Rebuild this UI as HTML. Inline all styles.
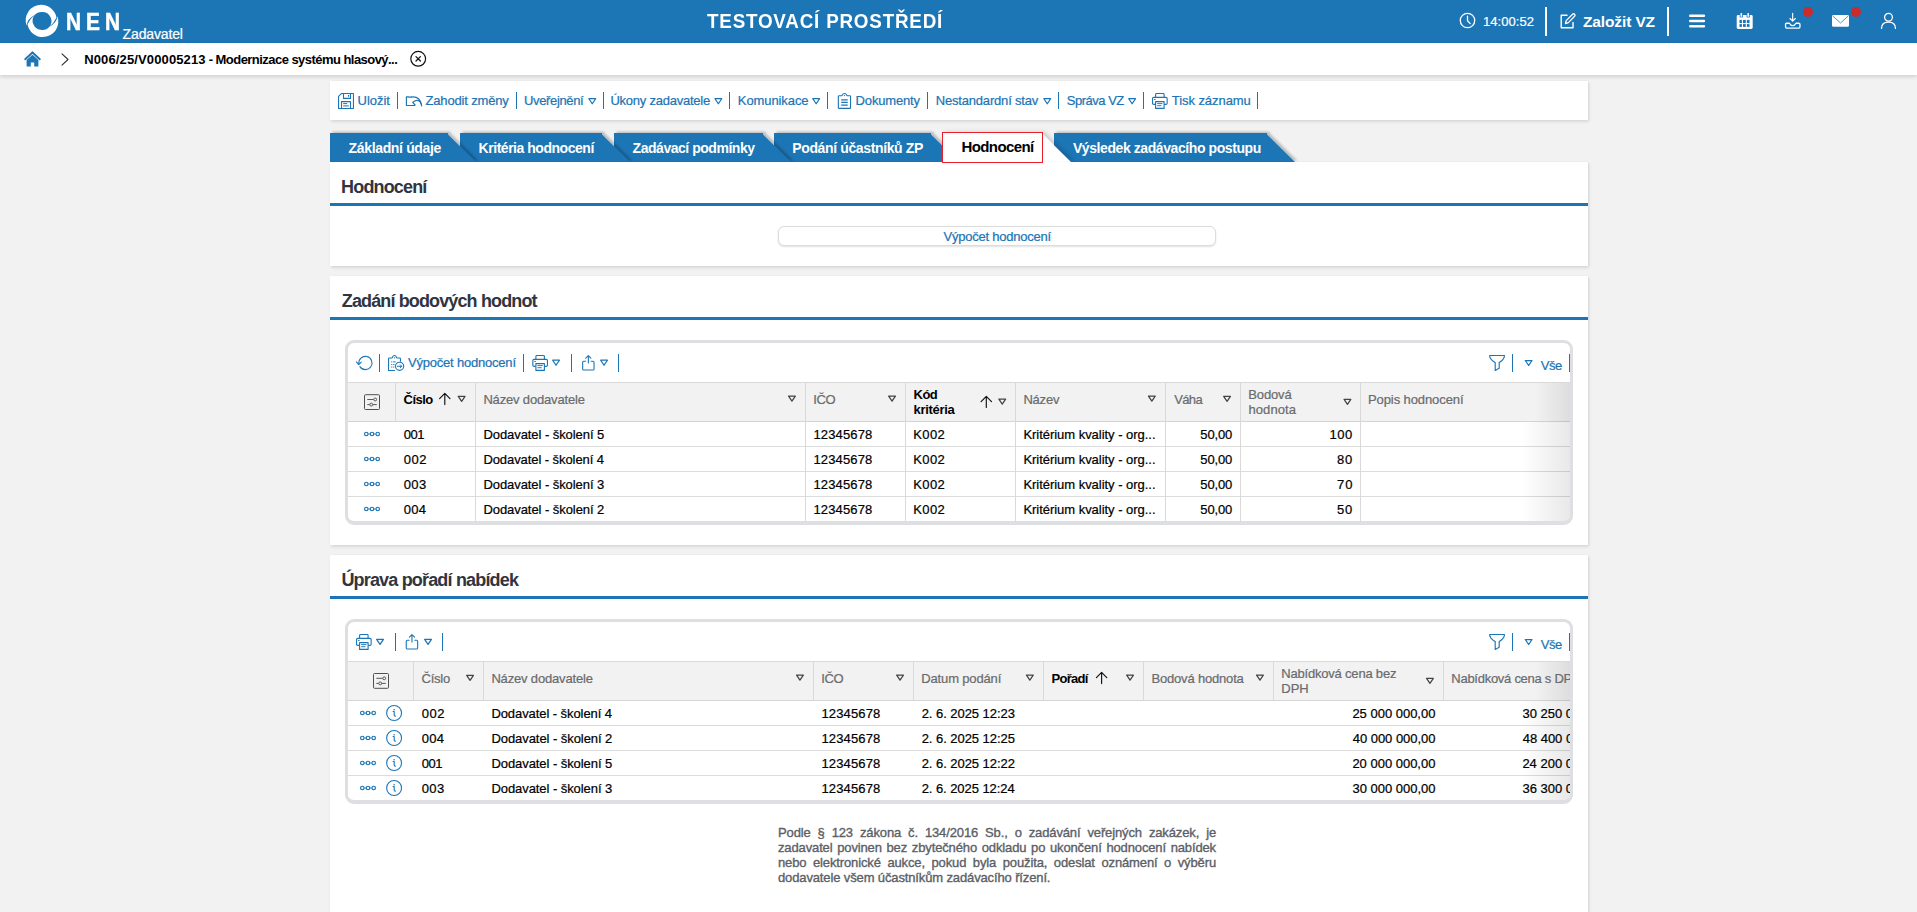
<!DOCTYPE html>
<html lang="cs">
<head>
<meta charset="utf-8">
<title>NEN - Hodnocení</title>
<style>
*{box-sizing:border-box;margin:0;padding:0}
html,body{width:1917px;height:912px;overflow:hidden}
body{background:#f2f2f2;font-family:"Liberation Sans",sans-serif;font-size:13px;color:#000;position:relative}
.t{position:absolute;white-space:nowrap;line-height:20px;height:20px}
.r{-webkit-text-stroke:0.22px}
.abs{position:absolute}
svg{position:absolute;overflow:visible}
.hdr{position:absolute;left:0;top:0;width:1917px;height:43px;background:#1c75b4}
.crumb{position:absolute;left:0;top:43px;width:1917px;height:32px;background:#fff;box-shadow:0 2px 4px rgba(0,0,0,.14)}
.card{position:absolute;left:330px;width:1258px;background:#fff;box-shadow:1px 2px 3px rgba(0,0,0,.10),1px 0 2px rgba(0,0,0,.05)}
.bline{position:absolute;left:0;width:1258px;height:3px;background:#1c75b4}
.sep{position:absolute;width:1px;background:#1c75b4}
.grid{position:absolute;left:345px;width:1228px;border:3px solid #dddfe2;border-bottom-width:4px;border-radius:9px;background:#fff;overflow:hidden}
.ghead{position:absolute;left:0;width:1222px;height:40px;background:#f2f2f2;border-top:1px solid #d9d9d9;border-bottom:1px solid #d4d4d4}
.vsep{position:absolute;width:1px;background:#d9d9d9}
.hsep{position:absolute;left:0;width:1222px;height:1px;background:#dcdcdc}
.fade{position:absolute;right:0;top:0;bottom:0;width:48px;background:linear-gradient(to right,rgba(0,0,0,0),rgba(0,0,0,.09))}
.btn{position:absolute;border:1px solid #dcdcdc;border-radius:6px;background:#fff;box-shadow:0 1px 2px rgba(0,0,0,.12)}
.note{position:absolute;left:778px;top:825px;width:438px;font-size:13px;line-height:15px;color:#5b6067;text-align:justify;letter-spacing:-0.13px;-webkit-text-stroke:0.35px #5b6067}
.tab{position:absolute;top:133px;height:29px;background:#1c75b4}
</style>
</head>
<body>
<div class="hdr">
<svg style="left:22px;top:0px" width="40" height="42" viewBox="22 0 40 42"><g transform="translate(42 21.2)" fill="#fff"><path d="M-15.4 4.4 A15.55 15.55 0 0 1 -0.8 -16.45 A15.55 15.55 0 0 1 14.5 -3.6 Q11.9 1.9 7.2 5.9 A9.2 9.2 0 0 0 0.1 -9.3 A9.2 9.2 0 0 0 -7.4 -6.1 Q-15 -1.95 -15.4 4.4 Z"/><path d="M-15.4 4.4 A15.55 15.55 0 0 1 -0.8 -16.45 A15.55 15.55 0 0 1 14.5 -3.6 Q11.9 1.9 7.2 5.9 A9.2 9.2 0 0 0 0.1 -9.3 A9.2 9.2 0 0 0 -7.4 -6.1 Q-15 -1.95 -15.4 4.4 Z" transform="rotate(180) translate(0 0.6)"/></g></svg>
<span class="t " style="left:65.7px;top:12px;font-size:24px;font-weight:700;color:#fff;letter-spacing:5.79px;-webkit-text-stroke:0.55px #fff;transform:scaleX(0.87);transform-origin:0 0;">NEN</span>
<span class="t r" style="left:122.6px;top:24px;font-size:14px;color:#fff;letter-spacing:-0.15px;">Zadavatel</span>
<span class="t " style="left:706.6px;top:11px;font-size:20px;font-weight:700;color:#fff;letter-spacing:0.857px;transform:scaleX(0.94);transform-origin:0 0;">TESTOVACÍ PROSTŘEDÍ</span>
<svg style="left:1459px;top:12px;" width="17" height="17" viewBox="0 0 17 17" fill="none"><circle cx="8.5" cy="8.5" r="7.2" stroke="#fff" stroke-width="1.3"/><path d="M8.5 4.2 V8.8 L11.2 11.6" stroke="#fff" stroke-width="1.3" stroke-linecap="round" stroke-linejoin="round"/></svg>
<span class="t r" style="left:1482.9px;top:12px;font-size:13px;color:#fff;letter-spacing:0.057px;">14:00:52</span>
<div class="abs" style="left:1545px;top:7px;width:2px;height:29px;background:#fff"></div>
<svg style="left:1559px;top:12px;" width="18" height="18" viewBox="0 0 18 18" fill="none"><path d="M8 3.2 H2.2 V15.8 H14 V10.5" stroke="#fff" stroke-width="1.4" stroke-linejoin="round" stroke-linecap="round"/><path d="M6.5 11.6 L7.2 8.6 L13.6 2.2 A1.3 1.3 0 0 1 15.6 4.2 L9.4 10.6 Z" stroke="#fff" stroke-width="1.3" stroke-linejoin="round"/></svg>
<span class="t " style="left:1582.9px;top:12px;font-size:15.5px;font-weight:700;color:#fff;letter-spacing:-0.111px;">Založit VZ</span>
<div class="abs" style="left:1667px;top:7px;width:2px;height:29px;background:#fff"></div>
<svg style="left:1689px;top:13px;" width="16" height="16" viewBox="0 0 16 16" fill="none"><path d="M1.3 2.7 H14.9 M1.3 8 H14.9 M1.3 13.3 H14.9" stroke="#fff" stroke-width="2.6" stroke-linecap="round"/></svg>
<svg style="left:1736px;top:12px;" width="18" height="18" viewBox="0 0 18 18" fill="none"><rect x="0.7" y="3.1" width="16" height="13.8" rx="1.4" fill="#fff"/>
<rect x="3.7" y="2.4" width="3.2" height="3" fill="#1c75b4"/><rect x="10.6" y="2.4" width="3.2" height="3" fill="#1c75b4"/>
<rect x="4.5" y="0.9" width="1.6" height="3.9" rx="0.6" fill="#fff"/><rect x="11.4" y="0.9" width="1.6" height="3.9" rx="0.6" fill="#fff"/>
<g fill="#1c75b4"><rect x="3.5" y="7.9" width="2.4" height="3.2"/><rect x="3.5" y="12.1" width="2.4" height="2.8"/><rect x="7.0" y="7.9" width="2.8" height="3.2"/><rect x="7.0" y="12.1" width="2.8" height="2.8"/><rect x="10.9" y="7.9" width="2.6" height="3.2"/><rect x="10.9" y="12.1" width="2.6" height="2.8"/></g></svg>
<svg style="left:1784px;top:12px;" width="18" height="18" viewBox="0 0 18 18" fill="none"><path d="M8.65 1.2 V8.8 M6 6.5 L8.65 9.1 L11.3 6.5" stroke="#fff" stroke-width="1.15" stroke-linecap="round" stroke-linejoin="round"/><path d="M5.4 11.25 H2.6 Q1.55 11.25 1.55 12.3 V15 Q1.55 16.05 2.6 16.05 H14.9 Q15.95 16.05 15.95 15 V12.3 Q15.95 11.25 14.9 11.25 H12 C11 13.2 10 13.6 8.7 13.6 C7.4 13.6 6.4 13.2 5.4 11.25 Z" stroke="#fff" stroke-width="1.3" stroke-linejoin="round"/></svg>
<div class="abs" style="left:1803px;top:7px;width:10px;height:10px;border-radius:50%;background:#cd2a2c"></div>
<svg style="left:1832px;top:15px;" width="17" height="12" viewBox="0 0 17 12" fill="none"><rect x="0" y="0" width="17" height="11.8" rx="1.4" fill="#fff"/><path d="M0.8 1 L8.5 8 L16.2 1" stroke="#1c75b4" stroke-width="0.75"/></svg>
<div class="abs" style="left:1851px;top:7px;width:10px;height:10px;border-radius:50%;background:#cd2a2c"></div>
<svg style="left:1880px;top:12px;" width="17" height="18" viewBox="0 0 17 18" fill="none"><circle cx="8.5" cy="5.3" r="3.9" stroke="#fff" stroke-width="1.3"/><path d="M1.5 16.4 C1.5 12 4.6 10.1 8.5 10.1 C12.4 10.1 15.5 12 15.5 16.4" stroke="#fff" stroke-width="1.3" stroke-linecap="round"/></svg>
</div>
<div class="crumb"></div>
<svg style="left:24px;top:51px;" width="17" height="16" viewBox="0 0 17 16" fill="none"><path d="M8.5 1.6 L1.2 8.2" stroke="#1c75b4" stroke-width="2" stroke-linecap="round"/><path d="M8.5 1.6 L15.8 8.2" stroke="#1c75b4" stroke-width="2" stroke-linecap="round"/><path d="M2.6 9 L8.5 3.8 L14.4 9 V15.6 H10.2 V11.4 H6.8 V15.6 H2.6 Z" fill="#1c75b4"/></svg>
<svg style="left:61px;top:53px;" width="8" height="13" viewBox="0 0 8 13" fill="none"><path d="M1 0.8 L7 6.5 L1 12.2" stroke="#333" stroke-width="1.1" stroke-linejoin="round" stroke-linecap="round"/></svg>
<span class="t " style="left:84.2px;top:50px;font-size:13px;font-weight:700;color:#000;letter-spacing:0.131px;">N006/25/V00005213</span>
<span class="t " style="left:208.7px;top:50px;font-size:13px;font-weight:700;color:#000;letter-spacing:-0.542px;">- Modernizace systému hlasový...</span>
<svg style="left:410px;top:50px;" width="17" height="17" viewBox="0 0 17 17" fill="none"><g transform="translate(0.2 0.8)"><circle cx="8" cy="8" r="7.4" stroke="#111" stroke-width="1.2"/><path d="M5.8 5.8 L10.2 10.2 M10.2 5.8 L5.8 10.2" stroke="#111" stroke-width="1.25" stroke-linecap="round"/></g></svg>
<div class="card" style="top:81px;height:39px"></div>
<svg style="left:338px;top:93px;" width="16" height="16" viewBox="0 0 16 16" fill="none"><path d="M3.4 0.55 H15.45 V15.45 H0.55 V3.4 Z" stroke="#1c75b4" stroke-width="1.1" stroke-linejoin="round"/><path d="M5.5 0.6 V5.4 H12.5 V0.6" stroke="#1c75b4" stroke-width="1.1" stroke-linejoin="round"/><path d="M10.5 2 V3.7" stroke="#1c75b4" stroke-width="1.2"/><path d="M3.5 15.4 V8.6 H12.5 V15.4" stroke="#1c75b4" stroke-width="1.1" stroke-linejoin="round"/><path d="M5.2 10.6 H9.2 M5.2 12.9 H10.8" stroke="#1c75b4" stroke-width="1"/></svg>
<span class="t r" style="left:357.6px;top:91px;font-size:13px;color:#1b74b5;letter-spacing:-0.04px;">Uložit</span>
<div class="abs" style="left:397px;top:92px;width:1px;height:17px;background:#1b74b5"></div>
<svg style="left:405px;top:96px;" width="18" height="11" viewBox="0 0 18 11" fill="none"><g transform="translate(0.5 0)"><path d="M6 1.1 H3.6 L2.9 0.9 H0.9 V9.5 H9.2" stroke="#1c75b4" stroke-width="1.15" stroke-linejoin="round" stroke-linecap="round"/><path d="M6 1 C11.6 0 15.7 3.8 16.2 9.8" stroke="#1c75b4" stroke-width="1.25" stroke-linecap="round"/><path d="M15.6 8 C14.6 5 12.6 4 10.4 4.5 L7.2 6.3 L9.6 9" stroke="#1c75b4" stroke-width="1.15" stroke-linecap="round" stroke-linejoin="round"/></g></svg>
<span class="t r" style="left:425.5px;top:91px;font-size:13px;color:#1b74b5;letter-spacing:-0.167px;">Zahodit změny</span>
<div class="abs" style="left:516px;top:92px;width:1px;height:17px;background:#1b74b5"></div>
<span class="t r" style="left:524.0px;top:91px;font-size:13px;color:#1b74b5;letter-spacing:-0.356px;">Uveřejnění</span>
<svg style="left:588px;top:98px;" width="9" height="7" viewBox="0 0 9 7" fill="none"><g transform="translate(0.25 0.1)"><path d="M0.625 0.625 L7.375 0.625 L4.0 5.625 Z" stroke="#1b74b5" stroke-width="1.25" stroke-linejoin="round"/></g></svg>
<div class="abs" style="left:603px;top:92px;width:1px;height:17px;background:#1b74b5"></div>
<span class="t r" style="left:610.4px;top:91px;font-size:13px;color:#1b74b5;letter-spacing:-0.233px;">Úkony zadavatele</span>
<svg style="left:714px;top:98px;" width="9" height="7" viewBox="0 0 9 7" fill="none"><g transform="translate(0.35 0.1)"><path d="M0.625 0.625 L7.375 0.625 L4.0 5.625 Z" stroke="#1b74b5" stroke-width="1.25" stroke-linejoin="round"/></g></svg>
<div class="abs" style="left:729px;top:92px;width:1px;height:17px;background:#1b74b5"></div>
<span class="t r" style="left:737.8px;top:91px;font-size:13px;color:#1b74b5;letter-spacing:-0.089px;">Komunikace</span>
<svg style="left:812px;top:98px;" width="9" height="7" viewBox="0 0 9 7" fill="none"><g transform="translate(0.15 0.1)"><path d="M0.625 0.625 L7.375 0.625 L4.0 5.625 Z" stroke="#1b74b5" stroke-width="1.25" stroke-linejoin="round"/></g></svg>
<div class="abs" style="left:827px;top:92px;width:1px;height:17px;background:#1b74b5"></div>
<svg style="left:837px;top:93px;" width="15" height="17" viewBox="0 0 15 17" fill="none"><g transform="translate(0.5 0)"><path d="M0.85 14.7 V3.4 Q0.85 2.7 1.55 2.7 H4.2 C5 2.7 4.7 0.55 7 0.55 C9.3 0.55 9 2.7 9.8 2.7 H12.35 Q13.05 2.7 13.05 3.4 V14.7 Q13.05 15.4 12.35 15.4 H1.55 Q0.85 15.4 0.85 14.7 Z" stroke="#1b74b5" stroke-width="1.1" stroke-linejoin="round"/><circle cx="7" cy="2.6" r="0.65" fill="#1b74b5"/><path d="M3.7 6.85 H10.2 M3.7 9.4 H10.2 M3.7 12 H10.2" stroke="#1b74b5" stroke-width="1.25"/></g></svg>
<span class="t r" style="left:855.6px;top:91px;font-size:13px;color:#1b74b5;letter-spacing:-0.163px;">Dokumenty</span>
<div class="abs" style="left:927px;top:92px;width:1px;height:17px;background:#1b74b5"></div>
<span class="t r" style="left:935.7px;top:91px;font-size:13px;color:#1b74b5;letter-spacing:-0.181px;">Nestandardní stav</span>
<svg style="left:1043px;top:98px;" width="9" height="7" viewBox="0 0 9 7" fill="none"><g transform="translate(0.25 0.1)"><path d="M0.625 0.625 L7.375 0.625 L4.0 5.625 Z" stroke="#1b74b5" stroke-width="1.25" stroke-linejoin="round"/></g></svg>
<div class="abs" style="left:1058px;top:92px;width:1px;height:17px;background:#1b74b5"></div>
<span class="t r" style="left:1066.8px;top:91px;font-size:13px;color:#1b74b5;letter-spacing:-0.487px;">Správa VZ</span>
<svg style="left:1128px;top:98px;" width="9" height="7" viewBox="0 0 9 7" fill="none"><g transform="translate(0.15 0.1)"><path d="M0.625 0.625 L7.375 0.625 L4.0 5.625 Z" stroke="#1b74b5" stroke-width="1.25" stroke-linejoin="round"/></g></svg>
<div class="abs" style="left:1143px;top:92px;width:1px;height:17px;background:#1b74b5"></div>
<svg style="left:1152px;top:93px;" width="16" height="16" viewBox="0 0 16 16" fill="none"><path d="M3.6 4.2 V1.4 Q3.6 0.55 4.5 0.55 H11.2 Q12.1 0.55 12.1 1.4 V4.2" stroke="#1b74b5" stroke-width="1.1"/><path d="M3.4 11.4 H1.8 Q0.55 11.4 0.55 10.2 V5.6 Q0.55 4.4 1.8 4.4 H13.9 Q15.15 4.4 15.15 5.6 V10.2 Q15.15 11.4 13.9 11.4 H12.3" stroke="#1b74b5" stroke-width="1.1"/><path d="M3.6 8.6 H12.1 V15.4 H3.6 Z" stroke="#1b74b5" stroke-width="1.1" stroke-linejoin="round"/><path d="M5.2 10.6 H10.4 M5.2 12.7 H9.4" stroke="#1b74b5" stroke-width="0.95"/><path d="M2 6.5 H3.6" stroke="#1b74b5" stroke-width="0.9"/></svg>
<span class="t r" style="left:1171.8px;top:91px;font-size:13px;color:#1b74b5;letter-spacing:-0.064px;">Tisk záznamu</span>
<div class="abs" style="left:1257px;top:92px;width:1px;height:17px;background:#1b74b5"></div>
<svg style="left:330px;top:130px" width="980" height="32" viewBox="0 0 980 32"><defs><filter id="ts" x="-5%" y="-30%" width="110%" height="160%"><feDropShadow dx="2.4" dy="-1.3" stdDeviation="1.3" flood-color="#000" flood-opacity=".23"/></filter><filter id="tw" x="-5%" y="-30%" width="115%" height="160%"><feDropShadow dx="3" dy="-1" stdDeviation="2" flood-color="#000" flood-opacity=".16"/></filter></defs><polygon points="724,3 937,3 937,4.5 965,32 724,32" fill="#1c75b4" filter="url(#ts)"/><polygon points="612,3 713,3 713,4.5 741,32 612,32" fill="#fff" filter="url(#tw)"/><polygon points="444,3 601,3 601,4.5 629,32 444,32" fill="#1c75b4" filter="url(#ts)"/><polygon points="284,3 433,3 433,4.5 461,32 284,32" fill="#1c75b4" filter="url(#ts)"/><polygon points="130,3 272,3 272,4.5 300,32 130,32" fill="#1c75b4" filter="url(#ts)"/><polygon points="0,3 118,3 118,4.5 146,32 0,32" fill="#1c75b4" filter="url(#ts)"/></svg>
<div class="abs" style="left:942px;top:132px;width:101px;height:31px;border:1px solid #e8202a;background:#fff;z-index:3"></div>
<span class="t " style="left:348.6px;top:138px;font-size:14px;font-weight:700;color:#fff;letter-spacing:-0.346px;">Základní údaje</span>
<span class="t " style="left:478.6px;top:138px;font-size:14px;font-weight:700;color:#fff;letter-spacing:-0.471px;">Kritéria hodnocení</span>
<span class="t " style="left:632.6px;top:138px;font-size:14px;font-weight:700;color:#fff;letter-spacing:-0.469px;">Zadávací podmínky</span>
<span class="t " style="left:792.3px;top:138px;font-size:14px;font-weight:700;color:#fff;letter-spacing:-0.372px;">Podání účastníků ZP</span>
<span class="t " style="left:961.4px;top:137px;font-size:15px;font-weight:700;color:#000;letter-spacing:-0.575px;z-index:4;">Hodnocení</span>
<span class="t " style="left:1072.9px;top:138px;font-size:14px;font-weight:700;color:#fff;letter-spacing:-0.415px;">Výsledek zadávacího postupu</span>
<div class="card" style="top:162px;height:104px"><div class="bline" style="top:41px"></div></div>
<span class="t " style="left:341.1px;top:177px;font-size:18px;font-weight:700;color:#30353f;letter-spacing:-0.85px;">Hodnocení</span>
<div class="btn" style="left:778px;top:226px;width:438px;height:20px"></div>
<span class="t r" style="left:943.5px;top:227px;font-size:13px;color:#1b74b5;letter-spacing:-0.225px;">Výpočet hodnocení</span>
<div class="card" style="top:276px;height:269px"><div class="bline" style="top:41px"></div></div>
<span class="t " style="left:341.8px;top:291px;font-size:18px;font-weight:700;color:#30353f;letter-spacing:-0.871px;">Zadání bodových hodnot</span>
<div class="card" style="top:555px;height:380px"><div class="bline" style="top:41px"></div></div>
<span class="t " style="left:341.4px;top:570px;font-size:18px;font-weight:700;color:#30353f;letter-spacing:-0.825px;">Úprava pořadí nabídek</span>
<div class="grid" style="top:340px;height:185px">
<div class="ghead" style="top:39px"></div>
<div class="hsep" style="top:103px"></div>
<div class="hsep" style="top:128px"></div>
<div class="hsep" style="top:153px"></div>
<div class="vsep" style="left:47px;top:39px;height:40px"></div>
<div class="vsep" style="left:127px;top:39px;height:140px"></div>
<div class="vsep" style="left:457px;top:39px;height:140px"></div>
<div class="vsep" style="left:557px;top:39px;height:140px"></div>
<div class="vsep" style="left:667px;top:39px;height:140px"></div>
<div class="vsep" style="left:817px;top:39px;height:140px"></div>
<div class="vsep" style="left:892px;top:39px;height:140px"></div>
<div class="vsep" style="left:1012px;top:39px;height:140px"></div>
<div class="fade" style="top:79px"></div>
<div class="fade" style="top:40px;height:39px;bottom:auto;width:36px;background:linear-gradient(to right,rgba(0,0,0,0),rgba(0,0,0,.085))"></div>
</div>
<svg style="left:356px;top:355px;" width="17" height="16" viewBox="0 0 17 16" fill="none"><path d="M2.9 9 A6.6 6.6 0 1 1 3.9 11.6" stroke="#1c75b4" stroke-width="1.1" stroke-linecap="round"/><path d="M0.4 6.9 L2.7 9.6 L5.3 7.2" stroke="#1c75b4" stroke-width="1.1" stroke-linecap="round" stroke-linejoin="round"/></svg>
<div class="abs" style="left:379px;top:354px;width:1px;height:18px;background:#1b74b5"></div>
<svg style="left:388px;top:355px;" width="17" height="17" viewBox="0 0 17 17" fill="none"><path d="M6.6 15.45 H0.55 V3.7 Q0.55 3 1.25 3 H3.9 C4.7 3 4.3 0.55 6.5 0.55 C8.7 0.55 8.3 3 9.1 3 H11.75 Q12.45 3 12.45 3.7 V6.2" stroke="#1c75b4" stroke-width="1.1" stroke-linejoin="round" stroke-linecap="round"/><circle cx="6.5" cy="2.8" r="0.65" fill="#1c75b4"/><path d="M3.2 6.9 H4.3 M5.2 6.9 H7.6 M3.2 9.6 H4.3 M5.2 9.6 H6.5 M3.2 12.1 H4.3 M5.2 12.1 H6.3" stroke="#1c75b4" stroke-width="1"/><circle cx="11.6" cy="11.3" r="4.1" stroke="#1c75b4" stroke-width="1.1"/><path d="M9.4 11.3 H13.6 M12.3 9.8 L13.8 11.3 L12.3 12.8" stroke="#1c75b4" stroke-width="1" stroke-linecap="round" stroke-linejoin="round"/></svg>
<span class="t r" style="left:408.0px;top:353px;font-size:13px;color:#1b74b5;letter-spacing:-0.206px;">Výpočet hodnocení</span>
<div class="abs" style="left:523px;top:354px;width:1px;height:18px;background:#1b74b5"></div>
<svg style="left:532px;top:355px;" width="17" height="16" viewBox="0 0 17 16" fill="none"><g transform="translate(0.3 0)"><path d="M3.6 4.2 V1.4 Q3.6 0.55 4.5 0.55 H11.2 Q12.1 0.55 12.1 1.4 V4.2" stroke="#1b74b5" stroke-width="1.1"/><path d="M3.4 11.4 H1.8 Q0.55 11.4 0.55 10.2 V5.6 Q0.55 4.4 1.8 4.4 H13.9 Q15.15 4.4 15.15 5.6 V10.2 Q15.15 11.4 13.9 11.4 H12.3" stroke="#1b74b5" stroke-width="1.1"/><path d="M3.6 8.6 H12.1 V15.4 H3.6 Z" stroke="#1b74b5" stroke-width="1.1" stroke-linejoin="round"/><path d="M5.2 10.6 H10.4 M5.2 12.7 H9.4" stroke="#1b74b5" stroke-width="0.95"/><path d="M2 6.5 H3.6" stroke="#1b74b5" stroke-width="0.9"/></g></svg>
<svg style="left:552px;top:359px;" width="9" height="7" viewBox="0 0 9 7" fill="none"><g transform="translate(0.05 0.6)"><path d="M0.625 0.625 L7.375 0.625 L4.0 5.625 Z" stroke="#1b74b5" stroke-width="1.25" stroke-linejoin="round"/></g></svg>
<div class="abs" style="left:571px;top:354px;width:1px;height:18px;background:#1b74b5"></div>
<svg style="left:582px;top:355px;" width="13" height="16" viewBox="0 0 13 16" fill="none"><path d="M3.5 6.3 H1.7 Q0.65 6.3 0.65 7.4 V14 Q0.65 15.05 1.7 15.05 H11 Q12.05 15.05 12.05 14 V7.4 Q12.05 6.3 11 6.3 H9.2" stroke="#1c75b4" stroke-width="1.1" stroke-linecap="round"/><path d="M6.35 8 V0.8 M3.8 3.2 L6.35 0.65 L8.9 3.2" stroke="#1c75b4" stroke-width="1.1" stroke-linecap="round" stroke-linejoin="round"/></svg>
<svg style="left:600px;top:359px;" width="9" height="7" viewBox="0 0 9 7" fill="none"><g transform="translate(0.05 0.6)"><path d="M0.625 0.625 L7.375 0.625 L4.0 5.625 Z" stroke="#1b74b5" stroke-width="1.25" stroke-linejoin="round"/></g></svg>
<div class="abs" style="left:618px;top:354px;width:1px;height:18px;background:#1b74b5"></div>
<svg style="left:1489px;top:354px;" width="17" height="18" viewBox="0 0 17 18" fill="none"><g transform="translate(0 0.9)"><path d="M0.65 0.6 H15.45 C15.45 4.6 12.2 6.4 10.2 7.7 V13.3 L6.2 15.5 V7.7 C4.2 6.4 0.65 4.6 0.65 0.6 Z" stroke="#1c75b4" stroke-width="1.15" stroke-linejoin="round"/></g></svg>
<div class="abs" style="left:1512px;top:354px;width:1px;height:18px;background:#1b74b5"></div>
<svg style="left:1524px;top:359px;" width="9" height="8" viewBox="0 0 9 8" fill="none"><g transform="translate(0.65 0.9)"><path d="M0.625 0.625 L7.375 0.625 L4.0 5.625 Z" stroke="#1b74b5" stroke-width="1.25" stroke-linejoin="round"/></g></svg>
<span class="t r" style="left:1540.8px;top:356px;font-size:13px;color:#1b74b5;letter-spacing:-0.45px;">Vše</span>
<div class="abs" style="left:1569px;top:354px;width:1px;height:18px;background:#1c75b4"></div>
<svg style="left:364px;top:394px;" width="16" height="17" viewBox="0 0 16 17" fill="none"><g transform="translate(0 0.2)"><rect x="0.5" y="0.5" width="15" height="14.8" rx="1" stroke="#505050" stroke-width="1"/><path d="M3.3 5.3 H9.6" stroke="#505050" stroke-width="0.95"/><circle cx="11.2" cy="5.3" r="1.45" stroke="#505050" stroke-width="0.95"/><path d="M3.3 10.4 H5.7 M8.8 10.4 H12.8" stroke="#505050" stroke-width="0.95"/><circle cx="7.25" cy="10.4" r="1.45" stroke="#505050" stroke-width="0.95"/></g></svg>
<span class="t " style="left:403.5px;top:390px;font-size:13px;font-weight:700;color:#000;letter-spacing:-0.5px;">Číslo</span>
<svg style="left:438px;top:392px;" width="13" height="14" viewBox="0 0 13 14" fill="none"><g transform="translate(0.8 0.7)"><path d="M6 11.9 V0.9 M0.8 6 L6 0.7 L11.2 6" stroke="#111" stroke-width="1.15" stroke-linecap="round" stroke-linejoin="round"/></g></svg>
<svg style="left:457px;top:395px;" width="9" height="8" viewBox="0 0 9 8" fill="none"><g transform="translate(0.65 0.7)"><path d="M0.625 0.625 L7.375 0.625 L4.0 5.625 Z" stroke="#444" stroke-width="1.25" stroke-linejoin="round"/></g></svg>
<span class="t r" style="left:483.4px;top:390px;font-size:13px;color:#6a6b6d;letter-spacing:-0.167px;">Název dodavatele</span>
<svg style="left:787px;top:395px;" width="9" height="7" viewBox="0 0 9 7" fill="none"><g transform="translate(0.95 0.5)"><path d="M0.625 0.625 L7.375 0.625 L4.0 5.625 Z" stroke="#444" stroke-width="1.25" stroke-linejoin="round"/></g></svg>
<span class="t r" style="left:813.2px;top:390px;font-size:13px;color:#6a6b6d;letter-spacing:-0.4px;">IČO</span>
<svg style="left:888px;top:395px;" width="9" height="7" viewBox="0 0 9 7" fill="none"><g transform="translate(0.05 0.5)"><path d="M0.625 0.625 L7.375 0.625 L4.0 5.625 Z" stroke="#444" stroke-width="1.25" stroke-linejoin="round"/></g></svg>
<span class="t " style="left:913.6px;top:385px;font-size:13px;font-weight:700;color:#000;letter-spacing:-0.55px;">Kód</span>
<span class="t " style="left:913.5px;top:400px;font-size:13px;font-weight:700;color:#000;letter-spacing:-0.3px;">kritéria</span>
<svg style="left:980px;top:395px;" width="13" height="13" viewBox="0 0 13 13" fill="none"><g transform="translate(0.3 0.6)"><path d="M6 11.9 V0.9 M0.8 6 L6 0.7 L11.2 6" stroke="#111" stroke-width="1.15" stroke-linecap="round" stroke-linejoin="round"/></g></svg>
<svg style="left:998px;top:398px;" width="9" height="7" viewBox="0 0 9 7" fill="none"><g transform="translate(0.25 0.5)"><path d="M0.625 0.625 L7.375 0.625 L4.0 5.625 Z" stroke="#444" stroke-width="1.25" stroke-linejoin="round"/></g></svg>
<span class="t r" style="left:1023.4px;top:390px;font-size:13px;color:#6a6b6d;letter-spacing:-0.2px;">Název</span>
<svg style="left:1147px;top:395px;" width="9" height="7" viewBox="0 0 9 7" fill="none"><g transform="translate(0.85 0.5)"><path d="M0.625 0.625 L7.375 0.625 L4.0 5.625 Z" stroke="#444" stroke-width="1.25" stroke-linejoin="round"/></g></svg>
<span class="t r" style="left:1174.2px;top:390px;font-size:13px;color:#6a6b6d;letter-spacing:-0.633px;">Váha</span>
<svg style="left:1223px;top:395px;" width="9" height="8" viewBox="0 0 9 8" fill="none"><g transform="translate(0.05 0.7)"><path d="M0.625 0.625 L7.375 0.625 L4.0 5.625 Z" stroke="#444" stroke-width="1.25" stroke-linejoin="round"/></g></svg>
<span class="t r" style="left:1248.3px;top:385px;font-size:13px;color:#6a6b6d;letter-spacing:-0.14px;">Bodová</span>
<span class="t r" style="left:1248.4px;top:400px;font-size:13px;color:#6a6b6d;letter-spacing:0.1px;">hodnota</span>
<svg style="left:1343px;top:398px;" width="9" height="8" viewBox="0 0 9 8" fill="none"><g transform="translate(0.45 0.7)"><path d="M0.625 0.625 L7.375 0.625 L4.0 5.625 Z" stroke="#444" stroke-width="1.25" stroke-linejoin="round"/></g></svg>
<span class="t r" style="left:1368.0px;top:390px;font-size:13px;color:#6a6b6d;letter-spacing:-0.093px;">Popis hodnocení</span>
<svg style="left:363px;top:431px;" width="18" height="6" viewBox="0 0 18 6" fill="none"><g transform="translate(0.9 0.0)"><path d="M4.4 3 H6.1 M10.1 3 H11.8" stroke="#1c75b4" stroke-width="0.9"/><circle cx="2.4" cy="3" r="1.75" stroke="#1c75b4" stroke-width="1.2"/><circle cx="8.1" cy="3" r="1.75" stroke="#1c75b4" stroke-width="1.2"/><circle cx="13.8" cy="3" r="1.75" stroke="#1c75b4" stroke-width="1.2"/></g></svg>
<span class="t r" style="left:403.7px;top:425px;font-size:13px;color:#000;letter-spacing:-0.45px;">001</span>
<span class="t r" style="left:483.4px;top:425px;font-size:13px;color:#000;letter-spacing:-0.065px;">Dodavatel - školení 5</span>
<span class="t r" style="left:813.5px;top:425px;font-size:13px;color:#000;letter-spacing:0.143px;">12345678</span>
<span class="t r" style="left:913.2px;top:425px;font-size:13px;color:#000;letter-spacing:0.433px;">K002</span>
<span class="t r" style="left:1023.4px;top:425px;font-size:13px;color:#000;letter-spacing:-0.032px;">Kritérium kvality - org...</span>
<span class="t r" style="left:1200.3px;top:425px;font-size:13px;color:#000;letter-spacing:-0.15px;">50,00</span>
<span class="t r" style="left:1329.5px;top:425px;font-size:13px;color:#000;letter-spacing:0.55px;">100</span>
<svg style="left:363px;top:456px;" width="18" height="6" viewBox="0 0 18 6" fill="none"><g transform="translate(0.9 0.0)"><path d="M4.4 3 H6.1 M10.1 3 H11.8" stroke="#1c75b4" stroke-width="0.9"/><circle cx="2.4" cy="3" r="1.75" stroke="#1c75b4" stroke-width="1.2"/><circle cx="8.1" cy="3" r="1.75" stroke="#1c75b4" stroke-width="1.2"/><circle cx="13.8" cy="3" r="1.75" stroke="#1c75b4" stroke-width="1.2"/></g></svg>
<span class="t r" style="left:403.7px;top:450px;font-size:13px;color:#000;letter-spacing:0.5px;">002</span>
<span class="t r" style="left:483.4px;top:450px;font-size:13px;color:#000;letter-spacing:-0.075px;">Dodavatel - školení 4</span>
<span class="t r" style="left:813.5px;top:450px;font-size:13px;color:#000;letter-spacing:0.143px;">12345678</span>
<span class="t r" style="left:913.2px;top:450px;font-size:13px;color:#000;letter-spacing:0.433px;">K002</span>
<span class="t r" style="left:1023.4px;top:450px;font-size:13px;color:#000;letter-spacing:-0.032px;">Kritérium kvality - org...</span>
<span class="t r" style="left:1200.3px;top:450px;font-size:13px;color:#000;letter-spacing:-0.15px;">50,00</span>
<span class="t r" style="left:1337.1px;top:450px;font-size:13px;color:#000;letter-spacing:0.8px;">80</span>
<svg style="left:363px;top:481px;" width="18" height="6" viewBox="0 0 18 6" fill="none"><g transform="translate(0.9 0.0)"><path d="M4.4 3 H6.1 M10.1 3 H11.8" stroke="#1c75b4" stroke-width="0.9"/><circle cx="2.4" cy="3" r="1.75" stroke="#1c75b4" stroke-width="1.2"/><circle cx="8.1" cy="3" r="1.75" stroke="#1c75b4" stroke-width="1.2"/><circle cx="13.8" cy="3" r="1.75" stroke="#1c75b4" stroke-width="1.2"/></g></svg>
<span class="t r" style="left:403.7px;top:475px;font-size:13px;color:#000;letter-spacing:0.45px;">003</span>
<span class="t r" style="left:483.4px;top:475px;font-size:13px;color:#000;letter-spacing:-0.065px;">Dodavatel - školení 3</span>
<span class="t r" style="left:813.5px;top:475px;font-size:13px;color:#000;letter-spacing:0.143px;">12345678</span>
<span class="t r" style="left:913.2px;top:475px;font-size:13px;color:#000;letter-spacing:0.433px;">K002</span>
<span class="t r" style="left:1023.4px;top:475px;font-size:13px;color:#000;letter-spacing:-0.032px;">Kritérium kvality - org...</span>
<span class="t r" style="left:1200.3px;top:475px;font-size:13px;color:#000;letter-spacing:-0.15px;">50,00</span>
<span class="t r" style="left:1337.0px;top:475px;font-size:13px;color:#000;letter-spacing:0.9px;">70</span>
<svg style="left:363px;top:506px;" width="18" height="6" viewBox="0 0 18 6" fill="none"><g transform="translate(0.9 0.0)"><path d="M4.4 3 H6.1 M10.1 3 H11.8" stroke="#1c75b4" stroke-width="0.9"/><circle cx="2.4" cy="3" r="1.75" stroke="#1c75b4" stroke-width="1.2"/><circle cx="8.1" cy="3" r="1.75" stroke="#1c75b4" stroke-width="1.2"/><circle cx="13.8" cy="3" r="1.75" stroke="#1c75b4" stroke-width="1.2"/></g></svg>
<span class="t r" style="left:403.7px;top:500px;font-size:13px;color:#000;letter-spacing:0.35px;">004</span>
<span class="t r" style="left:483.4px;top:500px;font-size:13px;color:#000;letter-spacing:-0.06px;">Dodavatel - školení 2</span>
<span class="t r" style="left:813.5px;top:500px;font-size:13px;color:#000;letter-spacing:0.143px;">12345678</span>
<span class="t r" style="left:913.2px;top:500px;font-size:13px;color:#000;letter-spacing:0.433px;">K002</span>
<span class="t r" style="left:1023.4px;top:500px;font-size:13px;color:#000;letter-spacing:-0.032px;">Kritérium kvality - org...</span>
<span class="t r" style="left:1200.3px;top:500px;font-size:13px;color:#000;letter-spacing:-0.15px;">50,00</span>
<span class="t r" style="left:1337.1px;top:500px;font-size:13px;color:#000;letter-spacing:0.8px;">50</span>
<div class="grid" style="top:619px;height:185px">
<div class="ghead" style="top:39px"></div>
<div class="hsep" style="top:103px"></div>
<div class="hsep" style="top:128px"></div>
<div class="hsep" style="top:153px"></div>
<div class="vsep" style="left:65px;top:39px;height:40px"></div>
<div class="vsep" style="left:135px;top:39px;height:40px"></div>
<div class="vsep" style="left:465px;top:39px;height:40px"></div>
<div class="vsep" style="left:565px;top:39px;height:40px"></div>
<div class="vsep" style="left:695px;top:39px;height:40px"></div>
<div class="vsep" style="left:795px;top:39px;height:40px"></div>
<div class="vsep" style="left:925px;top:39px;height:40px"></div>
<div class="vsep" style="left:1095px;top:39px;height:40px"></div>
<div class="fade" style="top:79px"></div>
<div class="fade" style="top:40px;height:39px;bottom:auto;width:36px;background:linear-gradient(to right,rgba(0,0,0,0),rgba(0,0,0,.085))"></div>
</div>
<svg style="left:356px;top:634px;" width="16" height="16" viewBox="0 0 16 16" fill="none"><path d="M3.6 4.2 V1.4 Q3.6 0.55 4.5 0.55 H11.2 Q12.1 0.55 12.1 1.4 V4.2" stroke="#1b74b5" stroke-width="1.1"/><path d="M3.4 11.4 H1.8 Q0.55 11.4 0.55 10.2 V5.6 Q0.55 4.4 1.8 4.4 H13.9 Q15.15 4.4 15.15 5.6 V10.2 Q15.15 11.4 13.9 11.4 H12.3" stroke="#1b74b5" stroke-width="1.1"/><path d="M3.6 8.6 H12.1 V15.4 H3.6 Z" stroke="#1b74b5" stroke-width="1.1" stroke-linejoin="round"/><path d="M5.2 10.6 H10.4 M5.2 12.7 H9.4" stroke="#1b74b5" stroke-width="0.95"/><path d="M2 6.5 H3.6" stroke="#1b74b5" stroke-width="0.9"/></svg>
<svg style="left:376px;top:638px;" width="9" height="8" viewBox="0 0 9 8" fill="none"><g transform="translate(0.05 0.7)"><path d="M0.625 0.625 L7.375 0.625 L4.0 5.625 Z" stroke="#1b74b5" stroke-width="1.25" stroke-linejoin="round"/></g></svg>
<div class="abs" style="left:395px;top:633px;width:1px;height:18px;background:#1b74b5"></div>
<svg style="left:405px;top:634px;" width="14" height="16" viewBox="0 0 14 16" fill="none"><g transform="translate(0.6 0)"><path d="M3.5 6.3 H1.7 Q0.65 6.3 0.65 7.4 V14 Q0.65 15.05 1.7 15.05 H11 Q12.05 15.05 12.05 14 V7.4 Q12.05 6.3 11 6.3 H9.2" stroke="#1c75b4" stroke-width="1.1" stroke-linecap="round"/><path d="M6.35 8 V0.8 M3.8 3.2 L6.35 0.65 L8.9 3.2" stroke="#1c75b4" stroke-width="1.1" stroke-linecap="round" stroke-linejoin="round"/></g></svg>
<svg style="left:424px;top:638px;" width="9" height="8" viewBox="0 0 9 8" fill="none"><g transform="translate(0.05 0.7)"><path d="M0.625 0.625 L7.375 0.625 L4.0 5.625 Z" stroke="#1b74b5" stroke-width="1.25" stroke-linejoin="round"/></g></svg>
<div class="abs" style="left:442px;top:633px;width:1px;height:18px;background:#1b74b5"></div>
<svg style="left:1489px;top:633px;" width="17" height="18" viewBox="0 0 17 18" fill="none"><g transform="translate(0 0.9)"><path d="M0.65 0.6 H15.45 C15.45 4.6 12.2 6.4 10.2 7.7 V13.3 L6.2 15.5 V7.7 C4.2 6.4 0.65 4.6 0.65 0.6 Z" stroke="#1c75b4" stroke-width="1.15" stroke-linejoin="round"/></g></svg>
<div class="abs" style="left:1512px;top:633px;width:1px;height:18px;background:#1b74b5"></div>
<svg style="left:1524px;top:638px;" width="9" height="8" viewBox="0 0 9 8" fill="none"><g transform="translate(0.65 0.9)"><path d="M0.625 0.625 L7.375 0.625 L4.0 5.625 Z" stroke="#1b74b5" stroke-width="1.25" stroke-linejoin="round"/></g></svg>
<span class="t r" style="left:1540.8px;top:635px;font-size:13px;color:#1b74b5;letter-spacing:-0.45px;">Vše</span>
<div class="abs" style="left:1569px;top:633px;width:1px;height:18px;background:#1c75b4"></div>
<svg style="left:373px;top:673px;" width="16" height="16" viewBox="0 0 16 16" fill="none"><rect x="0.5" y="0.5" width="15" height="14.8" rx="1" stroke="#505050" stroke-width="1"/><path d="M3.3 5.3 H9.6" stroke="#505050" stroke-width="0.95"/><circle cx="11.2" cy="5.3" r="1.45" stroke="#505050" stroke-width="0.95"/><path d="M3.3 10.4 H5.7 M8.8 10.4 H12.8" stroke="#505050" stroke-width="0.95"/><circle cx="7.25" cy="10.4" r="1.45" stroke="#505050" stroke-width="0.95"/></svg>
<span class="t r" style="left:421.5px;top:669px;font-size:13px;color:#6a6b6d;letter-spacing:-0.25px;">Číslo</span>
<svg style="left:466px;top:674px;" width="9" height="8" viewBox="0 0 9 8" fill="none"><g transform="translate(0.05 0.7)"><path d="M0.625 0.625 L7.375 0.625 L4.0 5.625 Z" stroke="#444" stroke-width="1.25" stroke-linejoin="round"/></g></svg>
<span class="t r" style="left:491.4px;top:669px;font-size:13px;color:#6a6b6d;letter-spacing:-0.167px;">Název dodavatele</span>
<svg style="left:795px;top:674px;" width="9" height="7" viewBox="0 0 9 7" fill="none"><g transform="translate(0.95 0.5)"><path d="M0.625 0.625 L7.375 0.625 L4.0 5.625 Z" stroke="#444" stroke-width="1.25" stroke-linejoin="round"/></g></svg>
<span class="t r" style="left:821.2px;top:669px;font-size:13px;color:#6a6b6d;letter-spacing:-0.4px;">IČO</span>
<svg style="left:896px;top:674px;" width="9" height="7" viewBox="0 0 9 7" fill="none"><g transform="translate(0.05 0.5)"><path d="M0.625 0.625 L7.375 0.625 L4.0 5.625 Z" stroke="#444" stroke-width="1.25" stroke-linejoin="round"/></g></svg>
<span class="t r" style="left:921.3px;top:669px;font-size:13px;color:#6a6b6d;letter-spacing:-0.155px;">Datum podání</span>
<svg style="left:1025px;top:674px;" width="9" height="7" viewBox="0 0 9 7" fill="none"><g transform="translate(0.85 0.5)"><path d="M0.625 0.625 L7.375 0.625 L4.0 5.625 Z" stroke="#444" stroke-width="1.25" stroke-linejoin="round"/></g></svg>
<span class="t " style="left:1051.5px;top:669px;font-size:13px;font-weight:700;color:#000;letter-spacing:-0.7px;">Pořadí</span>
<svg style="left:1095px;top:671px;" width="13" height="14" viewBox="0 0 13 14" fill="none"><g transform="translate(0.6 0.7)"><path d="M6 11.9 V0.9 M0.8 6 L6 0.7 L11.2 6" stroke="#111" stroke-width="1.15" stroke-linecap="round" stroke-linejoin="round"/></g></svg>
<svg style="left:1126px;top:674px;" width="9" height="7" viewBox="0 0 9 7" fill="none"><g transform="translate(0.05 0.5)"><path d="M0.625 0.625 L7.375 0.625 L4.0 5.625 Z" stroke="#444" stroke-width="1.25" stroke-linejoin="round"/></g></svg>
<span class="t r" style="left:1151.5px;top:669px;font-size:13px;color:#6a6b6d;letter-spacing:-0.185px;">Bodová hodnota</span>
<svg style="left:1255px;top:674px;" width="9" height="7" viewBox="0 0 9 7" fill="none"><g transform="translate(0.95 0.5)"><path d="M0.625 0.625 L7.375 0.625 L4.0 5.625 Z" stroke="#444" stroke-width="1.25" stroke-linejoin="round"/></g></svg>
<span class="t r" style="left:1281.3px;top:664px;font-size:13px;color:#6a6b6d;letter-spacing:-0.2px;">Nabídková cena bez</span>
<span class="t r" style="left:1281.3px;top:679px;font-size:13px;color:#6a6b6d;letter-spacing:0.0px;">DPH</span>
<svg style="left:1425px;top:677px;" width="9" height="8" viewBox="0 0 9 8" fill="none"><g transform="translate(0.95 0.7)"><path d="M0.625 0.625 L7.375 0.625 L4.0 5.625 Z" stroke="#444" stroke-width="1.25" stroke-linejoin="round"/></g></svg>
<div class="abs" style="left:1444px;top:663px;width:126px;height:36px;overflow:hidden">
</div>
<svg style="left:359px;top:710px;" width="18" height="6" viewBox="0 0 18 6" fill="none"><g transform="translate(0.9 0.0)"><path d="M4.4 3 H6.1 M10.1 3 H11.8" stroke="#1c75b4" stroke-width="0.9"/><circle cx="2.4" cy="3" r="1.75" stroke="#1c75b4" stroke-width="1.2"/><circle cx="8.1" cy="3" r="1.75" stroke="#1c75b4" stroke-width="1.2"/><circle cx="13.8" cy="3" r="1.75" stroke="#1c75b4" stroke-width="1.2"/></g></svg>
<svg style="left:385px;top:704px;" width="18" height="18" viewBox="0 0 18 18" fill="none"><g transform="translate(0.6 0.5)"><circle cx="8.5" cy="8.5" r="7.45" stroke="#1c75b4" stroke-width="1.1"/><path d="M7.5 7 H8.6 V10.6 Q8.6 11.7 9.8 11.6" stroke="#1c75b4" stroke-width="1.1" stroke-linecap="round" stroke-linejoin="round" fill="none"/><circle cx="8.5" cy="5.2" r="0.75" fill="#1c75b4"/></g></svg>
<span class="t r" style="left:421.7px;top:704px;font-size:13px;color:#000;letter-spacing:0.5px;">002</span>
<span class="t r" style="left:491.4px;top:704px;font-size:13px;color:#000;letter-spacing:-0.075px;">Dodavatel - školení 4</span>
<span class="t r" style="left:821.5px;top:704px;font-size:13px;color:#000;letter-spacing:0.143px;">12345678</span>
<span class="t r" style="left:921.7px;top:704px;font-size:13px;color:#000;letter-spacing:-0.053px;">2. 6. 2025 12:23</span>
<span class="t r" style="left:1352.4px;top:704px;font-size:13px;color:#000;letter-spacing:-0.008px;">25 000 000,00</span>
<svg style="left:359px;top:735px;" width="18" height="6" viewBox="0 0 18 6" fill="none"><g transform="translate(0.9 0.0)"><path d="M4.4 3 H6.1 M10.1 3 H11.8" stroke="#1c75b4" stroke-width="0.9"/><circle cx="2.4" cy="3" r="1.75" stroke="#1c75b4" stroke-width="1.2"/><circle cx="8.1" cy="3" r="1.75" stroke="#1c75b4" stroke-width="1.2"/><circle cx="13.8" cy="3" r="1.75" stroke="#1c75b4" stroke-width="1.2"/></g></svg>
<svg style="left:385px;top:729px;" width="18" height="18" viewBox="0 0 18 18" fill="none"><g transform="translate(0.6 0.5)"><circle cx="8.5" cy="8.5" r="7.45" stroke="#1c75b4" stroke-width="1.1"/><path d="M7.5 7 H8.6 V10.6 Q8.6 11.7 9.8 11.6" stroke="#1c75b4" stroke-width="1.1" stroke-linecap="round" stroke-linejoin="round" fill="none"/><circle cx="8.5" cy="5.2" r="0.75" fill="#1c75b4"/></g></svg>
<span class="t r" style="left:421.7px;top:729px;font-size:13px;color:#000;letter-spacing:0.35px;">004</span>
<span class="t r" style="left:491.4px;top:729px;font-size:13px;color:#000;letter-spacing:-0.06px;">Dodavatel - školení 2</span>
<span class="t r" style="left:821.5px;top:729px;font-size:13px;color:#000;letter-spacing:0.143px;">12345678</span>
<span class="t r" style="left:921.7px;top:729px;font-size:13px;color:#000;letter-spacing:-0.053px;">2. 6. 2025 12:25</span>
<span class="t r" style="left:1352.8px;top:729px;font-size:13px;color:#000;letter-spacing:-0.042px;">40 000 000,00</span>
<svg style="left:359px;top:760px;" width="18" height="6" viewBox="0 0 18 6" fill="none"><g transform="translate(0.9 0.0)"><path d="M4.4 3 H6.1 M10.1 3 H11.8" stroke="#1c75b4" stroke-width="0.9"/><circle cx="2.4" cy="3" r="1.75" stroke="#1c75b4" stroke-width="1.2"/><circle cx="8.1" cy="3" r="1.75" stroke="#1c75b4" stroke-width="1.2"/><circle cx="13.8" cy="3" r="1.75" stroke="#1c75b4" stroke-width="1.2"/></g></svg>
<svg style="left:385px;top:754px;" width="18" height="18" viewBox="0 0 18 18" fill="none"><g transform="translate(0.6 0.5)"><circle cx="8.5" cy="8.5" r="7.45" stroke="#1c75b4" stroke-width="1.1"/><path d="M7.5 7 H8.6 V10.6 Q8.6 11.7 9.8 11.6" stroke="#1c75b4" stroke-width="1.1" stroke-linecap="round" stroke-linejoin="round" fill="none"/><circle cx="8.5" cy="5.2" r="0.75" fill="#1c75b4"/></g></svg>
<span class="t r" style="left:421.7px;top:754px;font-size:13px;color:#000;letter-spacing:-0.45px;">001</span>
<span class="t r" style="left:491.4px;top:754px;font-size:13px;color:#000;letter-spacing:-0.065px;">Dodavatel - školení 5</span>
<span class="t r" style="left:821.5px;top:754px;font-size:13px;color:#000;letter-spacing:0.143px;">12345678</span>
<span class="t r" style="left:921.7px;top:754px;font-size:13px;color:#000;letter-spacing:-0.047px;">2. 6. 2025 12:22</span>
<span class="t r" style="left:1352.4px;top:754px;font-size:13px;color:#000;letter-spacing:-0.008px;">20 000 000,00</span>
<svg style="left:359px;top:785px;" width="18" height="6" viewBox="0 0 18 6" fill="none"><g transform="translate(0.9 0.0)"><path d="M4.4 3 H6.1 M10.1 3 H11.8" stroke="#1c75b4" stroke-width="0.9"/><circle cx="2.4" cy="3" r="1.75" stroke="#1c75b4" stroke-width="1.2"/><circle cx="8.1" cy="3" r="1.75" stroke="#1c75b4" stroke-width="1.2"/><circle cx="13.8" cy="3" r="1.75" stroke="#1c75b4" stroke-width="1.2"/></g></svg>
<svg style="left:385px;top:779px;" width="18" height="18" viewBox="0 0 18 18" fill="none"><g transform="translate(0.6 0.5)"><circle cx="8.5" cy="8.5" r="7.45" stroke="#1c75b4" stroke-width="1.1"/><path d="M7.5 7 H8.6 V10.6 Q8.6 11.7 9.8 11.6" stroke="#1c75b4" stroke-width="1.1" stroke-linecap="round" stroke-linejoin="round" fill="none"/><circle cx="8.5" cy="5.2" r="0.75" fill="#1c75b4"/></g></svg>
<span class="t r" style="left:421.7px;top:779px;font-size:13px;color:#000;letter-spacing:0.45px;">003</span>
<span class="t r" style="left:491.4px;top:779px;font-size:13px;color:#000;letter-spacing:-0.065px;">Dodavatel - školení 3</span>
<span class="t r" style="left:821.5px;top:779px;font-size:13px;color:#000;letter-spacing:0.143px;">12345678</span>
<span class="t r" style="left:921.7px;top:779px;font-size:13px;color:#000;letter-spacing:-0.067px;">2. 6. 2025 12:24</span>
<span class="t r" style="left:1352.6px;top:779px;font-size:13px;color:#000;letter-spacing:-0.025px;">30 000 000,00</span>
<div class="abs" style="left:1444px;top:662px;width:126px;height:139px;overflow:hidden">
<span class="t r" style="left:7.3px;top:7px;font-size:13px;color:#6a6b6d;letter-spacing:-0.268px;">Nabídková cena s DPH</span>
<span class="t r" style="left:78.6px;top:42px;font-size:13px;color:#000;letter-spacing:-0.025px;">30 250 000,00</span>
<span class="t r" style="left:78.8px;top:67px;font-size:13px;color:#000;letter-spacing:-0.042px;">48 400 000,00</span>
<span class="t r" style="left:78.4px;top:92px;font-size:13px;color:#000;letter-spacing:-0.008px;">24 200 000,00</span>
<span class="t r" style="left:78.6px;top:117px;font-size:13px;color:#000;letter-spacing:-0.025px;">36 300 000,00</span>
</div>
<div class="note">Podle § 123 zákona č. 134/2016 Sb., o zadávání veřejných zakázek, je zadavatel povinen bez zbytečného odkladu po ukončení hodnocení nabídek nebo elektronické aukce, pokud byla použita, odeslat oznámení o výběru dodavatele všem účastníkům zadávacího řízení.</div>
</body>
</html>
